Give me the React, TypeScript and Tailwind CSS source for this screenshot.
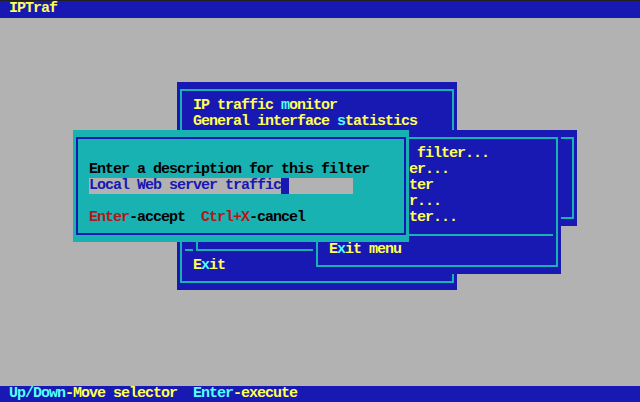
import React from "react";

type Item = { text: string; hot: number };

// rows 8..14 of the main menu sit under the dialog and the submenu
const mainItems: (Item | null)[] = [
  { text: "IP traffic monitor", hot: 11 },
  { text: "General interface statistics", hot: 18 },
  null,
  null,
  null,
  null,
  null,
  null,
  null,
];

const filterItems: Item[] = [
  { text: "Define new filter...", hot: 0 },
  { text: "Apply filter...", hot: 0 },
  { text: "Detach filter", hot: 2 },
  { text: "Edit filter...", hot: 0 },
  { text: "Delete filter...", hot: 2 },
];

const Hot = ({ item }: { item: Item }) => (
  <>
    {item.text.slice(0, item.hot)}
    <span className="text-[#54ffff]">{item.text[item.hot]}</span>
    {item.text.slice(item.hot + 1)}
  </>
);

const MenuRow = ({ item }: { item: Item }) => (
  <div className="h-4 leading-4 whitespace-pre text-[#ffff54]">
    <Hot item={item} />
  </div>
);

// first 10 columns of a submenu row lie under the dialog; clip them so no glyph bleeds out
const SubRow = ({ item }: { item: Item }) => (
  <div className="h-4 leading-4 whitespace-pre text-[#ffff54] flex">
    <span className="w-[80px] overflow-hidden shrink-0">
      <Hot item={{ text: item.text.slice(0, 10), hot: item.hot }} />
    </span>
    <span>{item.text.slice(10)}</span>
  </div>
);

const Win = ({
  className,
  frame,
  children,
}: {
  className: string;
  frame: string;
  children?: React.ReactNode;
}) => (
  <div className={`absolute overflow-hidden ${className}`}>
    <div className={`absolute left-[3px] right-[3px] top-[7px] bottom-[7px] border-2 ${frame}`} />
    <div className="relative flex flex-col pt-4 pl-4">{children}</div>
  </div>
);

export default function App() {
  return (
    <div className="w-[640px] h-[402px] bg-[#b2b2b2] flex flex-col overflow-hidden font-['Liberation_Mono',monospace] text-[15px] font-bold tracking-[-1px]">
      {/* title bar */}
      <div className="h-px bg-[#202020]" />
      <div className="h-[17px] bg-[#1818b2] pl-[9px] leading-4 text-[#ffff54]">IPTraf</div>

      {/* desktop */}
      <div className="relative h-[368px]">
        {/* main menu */}
        <Win className="left-[177px] top-[64px] w-[280px] h-[208px] bg-[#1818b2]" frame="border-[#18b2b2]">
          {mainItems.map((it, i) =>
            it ? <MenuRow key={i} item={it} /> : <div key={i} className="h-4" />
          )}
          <div className="h-4 -ml-2">
            <svg width="128" height="16" className="block">
              <rect x="0" y="7" width="8" height="2" fill="#18b2b2" />
              <rect x="11" y="0" width="2" height="9" fill="#18b2b2" />
              <rect x="11" y="7" width="117" height="2" fill="#18b2b2" />
            </svg>
          </div>
          <MenuRow item={{ text: "Exit", hot: 1 }} />
        </Win>

        {/* previous submenu behind */}
        <Win className="left-[329px] top-[112px] w-[248px] h-[96px] bg-[#1818b2]" frame="border-[#18b2b2]" />

        {/* filter submenu */}
        <Win className="left-[313px] top-[112px] w-[248px] h-[144px] bg-[#1818b2]" frame="border-[#18b2b2]">
          {filterItems.map((it, i) => (
            <SubRow key={i} item={it} />
          ))}
          <div className="h-4 flex items-center -ml-2 pr-2">
            <div className="h-[2px] w-[232px] bg-[#18b2b2] mt-[1px]" />
          </div>
          <MenuRow item={{ text: "Exit menu", hot: 1 }} />
        </Win>

        {/* description dialog */}
        <Win className="left-[73px] top-[112px] w-[336px] h-[112px] bg-[#18b2b2]" frame="border-[#1818b2]">
          <div className="h-4" />
          <div className="h-4 leading-4 whitespace-pre text-black">Enter a description for this filter</div>
          <div className="h-4 w-[264px] bg-[#b2b2b2] flex leading-4 text-[#1818b2] whitespace-pre">
            Local Web server traffic
            <span className="w-2 h-4 bg-[#1818b2]" />
          </div>
          <div className="h-4" />
          <div className="h-4 leading-4 whitespace-pre text-black">
            <span className="text-[#b21818]">Enter</span>-accept  <span className="text-[#b21818]">Ctrl+X</span>-cancel
          </div>
        </Win>
      </div>

      {/* status bar */}
      <div className="h-4 bg-[#1818b2] pl-[9px] leading-4 whitespace-pre">
        <span className="text-[#54ffff]">Up/Down</span>
        <span className="text-[#ffff54]">-Move selector  </span>
        <span className="text-[#54ffff]">Enter</span>
        <span className="text-[#ffff54]">-execute</span>
      </div>
    </div>
  );
}
